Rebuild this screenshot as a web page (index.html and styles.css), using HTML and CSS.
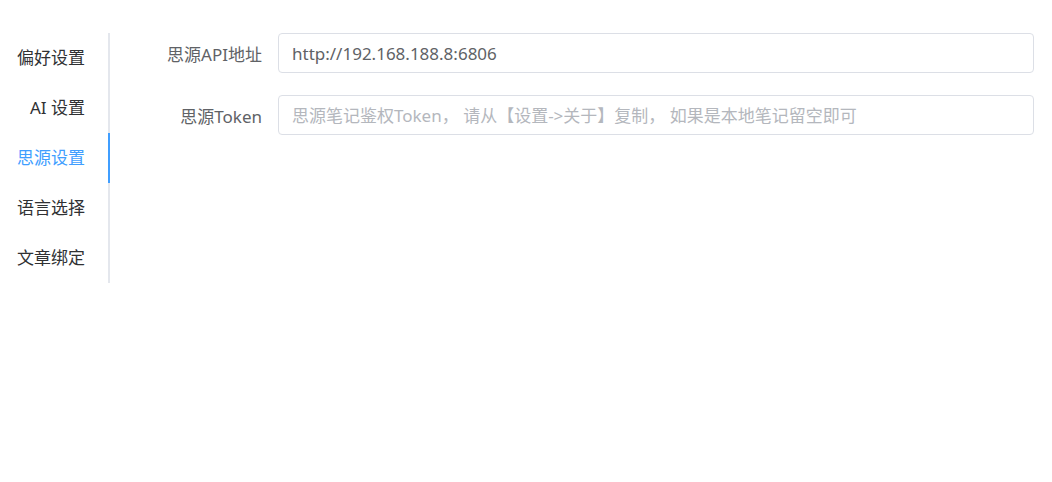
FILE: index.html
```html
<!DOCTYPE html>
<html lang="zh-CN">

<head>
    <meta charset="UTF-8" />
    <meta name="viewport" content="width=device-width, initial-scale=1.0" />
    <title>设置</title>
    <link rel="stylesheet" href="styles.css">
</head>

<body>
    <div class="settings">
        <div class="tabs">
            <div class="tab">偏好设置</div>
            <div class="tab">AI 设置</div>
            <div class="tab active">思源设置</div>
            <div class="tab">语言选择</div>
            <div class="tab">文章绑定</div>
        </div>

        <div class="panel">
            <div class="form-item">
                <label class="form-label" for="api">思源API地址</label>
                <input type="text" id="api" value="http://192.168.188.8:6806" />
            </div>
            <div class="form-item">
                <label class="form-label" for="token">思源Token</label>
                <input type="text" id="token" placeholder="思源笔记鉴权Token， 请从【设置->关于】复制， 如果是本地笔记留空即可" />
            </div>
        </div>
    </div>
</body>

</html>
```

FILE: styles.css
```css
body {
    margin: 0;
    font-family: "Noto Sans", "Noto Sans CJK SC", sans-serif;
    background: white;
}

.settings {
    display: flex;
    align-items: flex-start;
    padding-top: 33px;
}

.tabs {
    width: 108px;
    border-right: 2px solid #e4e7ed;
}

.tab {
    height: 50px;
    line-height: 50px;
    padding-right: 23px;
    text-align: right;
    font-size: 17px;
    color: #303133;
    position: relative;
}

.tab.active {
    color: #409eff;
}

.tab.active::after {
    content: "";
    position: absolute;
    right: -2px;
    top: 0;
    width: 2px;
    height: 50px;
    background: #409eff;
}

.panel {
    flex: 1;
    padding: 0 18px 0 20px;
}

.form-item {
    display: flex;
    align-items: center;
    margin-bottom: 22px;
}

.form-label {
    width: 132px;
    padding-right: 16px;
    text-align: right;
    font-size: 17px;
    color: #606266;
}

input {
    flex: 1;
    height: 40px;
    box-sizing: border-box;
    padding: 0 13px;
    border: 1px solid #dcdfe6;
    border-radius: 4px;
    font-family: inherit;
    font-size: 17px;
    color: #606266;
    outline: none;
}

input::placeholder {
    color: #b4b7bd;
}
```
